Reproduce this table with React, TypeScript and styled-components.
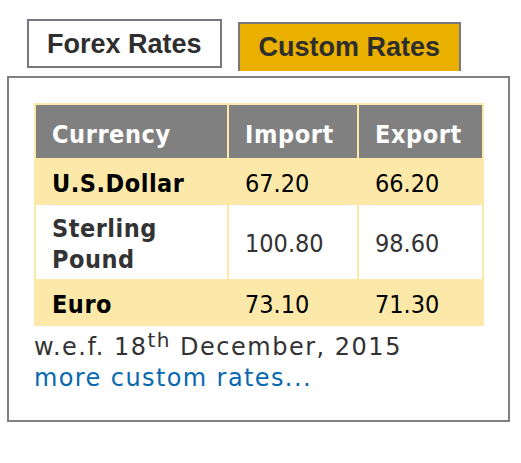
import React from "react";
import styled, { createGlobalStyle } from "styled-components";

const Global = createGlobalStyle`
  html, body { margin: 0; padding: 0; background: #ffffff; }
  body { font-family: "DejaVu Sans", Verdana, sans-serif; }
`;

const Page = styled.div`
  padding: 19px 0 0 7px;
  width: 503px;
`;

const TabRow = styled.div`
  display: flex;
  align-items: flex-start;
  gap: 16px;
  padding-left: 20px;
`;

const Tab = styled.div<{ $active?: boolean }>`
  font-family: "Liberation Sans", Arial, sans-serif;
  font-weight: bold;
  font-size: 27px;
  line-height: 43px;
  color: #2e2e2e;
  white-space: nowrap;
  border: 2px solid #78777f;
  padding: 2px ${(p) => (p.$active ? "19px" : "18px")} ${(p) => (p.$active ? "2px" : "0")};
  background: ${(p) => (p.$active ? "#e9b000" : "#ffffff")};
  border-bottom: ${(p) => (p.$active ? "none" : "2px solid #78777f")};
  margin-top: ${(p) => (p.$active ? "3px" : "0")};
`;

const Panel = styled.div`
  margin-top: 5px;
  border: 2px solid #808080;
  padding: 25px 24px 26px 25px;
`;

const Table = styled.table`
  width: 450px;
  table-layout: fixed;
  border-collapse: separate;
  border-spacing: 2px;
  background: #fce9a9;
  font-family: "DejaVu Sans Condensed", "DejaVu Sans", Verdana, sans-serif;
  font-stretch: condensed;
  font-size: 25px;
  line-height: 31px;
`;

const HeadCell = styled.th<{ $w: number }>`
  box-sizing: border-box;
  width: ${(p) => p.$w}px;
  background: #808080;
  color: #ffffff;
  font-weight: bold;
  letter-spacing: 0.6px;
  text-align: left;
  padding: 14px 16px 8px;
`;

const Cell = styled.td<{ $alt?: boolean; $bold?: boolean }>`
  box-sizing: border-box;
  background: ${(p) => (p.$alt ? "#ffffff" : "#fce9a9")};
  color: ${(p) => (p.$alt ? "#333333" : "#000000")};
  font-weight: ${(p) => (p.$bold ? "bold" : "normal")};
  letter-spacing: ${(p) => (p.$bold ? "0.5px" : "0")};
  text-align: left;
  vertical-align: middle;
  padding: 7.5px 16px 4.5px;
`;

const Note = styled.div`
  margin-top: 6px;
  font-family: "DejaVu Sans", Verdana, sans-serif;
  font-size: 24px;
  line-height: 31px;
  letter-spacing: 1.5px;
  color: #333333;
`;

const Sup = styled.sup`
  font-size: 20px;
  line-height: 0;
  vertical-align: 8px;
`;

const MoreLink = styled.a`
  display: block;
  color: #0868b0;
  letter-spacing: 1.4px;
  text-decoration: none;
`;

const rows = [
  { name: "U.S.Dollar", imp: "67.20", exp: "66.20", alt: false },
  { name: "Sterling\nPound", imp: "100.80", exp: "98.60", alt: true },
  { name: "Euro", imp: "73.10", exp: "71.30", alt: false },
];

export default function App() {
  return (
    <>
      <Global />
      <Page>
        <TabRow>
          <Tab>Forex Rates</Tab>
          <Tab $active>Custom Rates</Tab>
        </TabRow>
        <Panel>
          <Table>
            <thead>
              <tr>
                <HeadCell $w={191}>Currency</HeadCell>
                <HeadCell $w={128}>Import</HeadCell>
                <HeadCell $w={123}>Export</HeadCell>
              </tr>
            </thead>
            <tbody>
              {rows.map((r) => (
                <tr key={r.name}>
                  <Cell $alt={r.alt} $bold>
                    {r.name.split("\n").map((part, i) => (
                      <React.Fragment key={i}>
                        {i > 0 && <br />}
                        {part}
                      </React.Fragment>
                    ))}
                  </Cell>
                  <Cell $alt={r.alt}>{r.imp}</Cell>
                  <Cell $alt={r.alt}>{r.exp}</Cell>
                </tr>
              ))}
            </tbody>
          </Table>
          <Note>
            w.e.f. 18<Sup>th</Sup> December, 2015
            <MoreLink href="#">more custom rates...</MoreLink>
          </Note>
        </Panel>
      </Page>
    </>
  );
}
